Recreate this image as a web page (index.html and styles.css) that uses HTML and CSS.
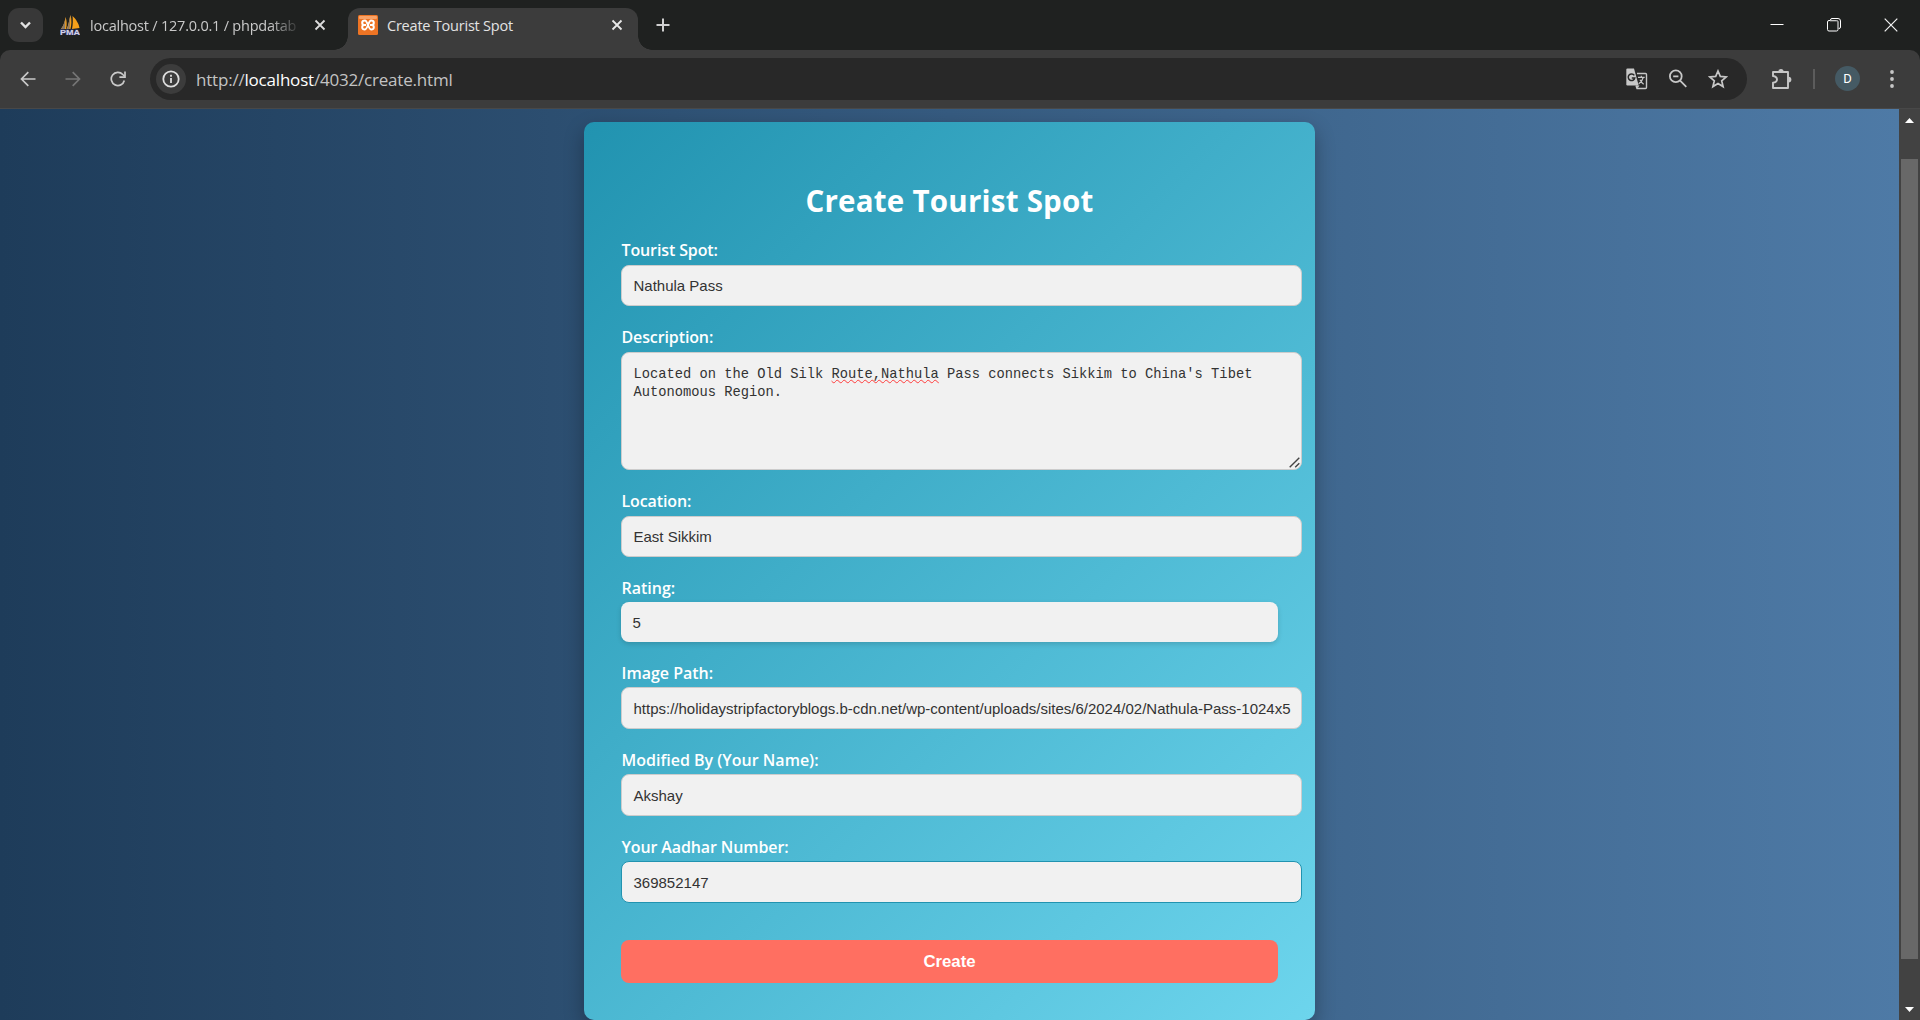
FILE: index.html
```html
<!DOCTYPE html>
<html lang="en">
<head>
<meta charset="utf-8">
<title>Create Tourist Spot</title>
<link rel="stylesheet" href="styles.css">
</head>
<body>
<div class="window">
  <header class="tabstrip">
    <div class="tab-search">
      <svg width="35" height="34" viewBox="0 0 35 34"><path d="M13 14.5l4.5 4.5 4.5-4.5" fill="none" stroke="#e3e3e3" stroke-width="2.4"/></svg>
    </div>
    <div class="tab tab-idle">
      <svg class="favicon" width="20" height="20" viewBox="0 0 20 20">
        <path d="M1 14C4 10 5 6 5.500 2C7 6 7 10 6 14zM6.500 14C9 9 9 5 10.500 0C12 5 11.500 10 10.500 14zM12 14C13 9 13 5 12.500 1C16 4 19 9 19.500 13z" fill="#f6a01a"/>
        <path d="M1 14C4 10 5 6 5.500 2L5 14zM7 14C9 9 9 5 10.500 0L9.500 14z" fill="#8a7968"/>
        <text class="pma" x="0" y="19.500" textLength="20" lengthAdjust="spacingAndGlyphs">PMA</text>
      </svg>
      <span class="tab-title tab-title-idle">localhost / 127.0.0.1 / phpdatab</span>
      <svg class="tab-close" width="12" height="12" viewBox="0 0 12 12"><path d="M1.500 1.500l9 9M10.500 1.500l-9 9" stroke="#dcdcdc" stroke-width="1.800"/></svg>
    </div>
    <div class="tab tab-active">
      <svg class="favicon" width="20" height="20" viewBox="0 0 20 20">
        <rect width="20" height="20" rx="1.500" fill="#ee7424"/><rect x="1" y="1" width="18" height="3" rx="1" fill="#f7a268"/>
        <path d="M7 5.500Q4.200 5.500 4.200 7.700T6.300 10Q4.200 10 4.200 12.300T7 14.500C9.500 14.500 10.500 5.500 13 5.500Q15.800 5.500 15.800 7.700T13.700 10Q15.800 10 15.800 12.300T13 14.500C10.500 14.500 9.500 5.500 7 5.500zM6 10h2M12 10h2" fill="none" stroke="#fff" stroke-width="2" stroke-linejoin="round"/>
      </svg>
      <span class="tab-title tab-title-active">Create Tourist Spot</span>
      <svg class="tab-close" width="12" height="12" viewBox="0 0 12 12"><path d="M1.500 1.500l9 9M10.500 1.500l-9 9" stroke="#e8e8e8" stroke-width="1.800"/></svg>
    </div>
    <svg class="new-tab" width="14" height="14" viewBox="0 0 14 14"><path d="M7 .5v13M.5 7h13" stroke="#d0d0d0" stroke-width="2"/></svg>
    <div class="window-controls">
      <svg width="14" height="14" viewBox="0 0 14 14"><path d="M.5 6.500h13" stroke="#fff"/></svg>
      <svg width="14" height="14" viewBox="0 0 14 14" fill="none"><path d="M3.500 2.500V2Q3.500.5 5 .5h6q2.500 0 2.500 2.500v6q0 1.500-1.500 1.500h-.5" stroke="#fff"/><rect x=".5" y="2.500" width="10.500" height="10.500" rx="1.500" stroke="#fff"/><path d="M3 3h8v8" stroke="#8a8a8a"/></svg>
      <svg width="14" height="14" viewBox="0 0 14 14"><path d="M.7.7l12.600 12.600M13.300.7L.7 13.300" stroke="#f2f2f2" stroke-width="1.200"/></svg>
    </div>
  </header>

  <nav class="toolbar">
    <svg class="nav-icon" width="16" height="16" viewBox="0 0 16 16"><path d="M15.500 8H2M8.300 1.200L1.500 8l6.800 6.800" fill="none" stroke="#c9c9c9" stroke-width="1.700"/></svg>
    <svg class="nav-icon" width="16" height="16" viewBox="0 0 16 16"><path d="M.5 8H14M7.700 1.200L14.500 8l-6.800 6.800" fill="none" stroke="#757575" stroke-width="1.700"/></svg>
    <svg class="nav-icon" width="16" height="16" viewBox="0 0 16 16"><path d="M14.300 9.500A6.600 6.600 0 1 1 12.800 3.500L14.800 5.500" fill="none" stroke="#c9c9c9" stroke-width="1.700"/><path d="M15 .5v5.600H9.400" fill="none" stroke="#c9c9c9" stroke-width="1.700"/></svg>
    <div class="omnibox">
      <span class="site-info"><svg width="18" height="18" viewBox="0 0 18 18"><circle cx="9" cy="9" r="7.700" fill="none" stroke="#dedede" stroke-width="1.800"/><path d="M9 8v5M9 4.800v2" stroke="#dedede" stroke-width="1.800"/></svg></span>
      <span class="url">http://<b>localhost</b>/4032/create.html</span>
      <div class="omnibox-actions">
        <svg width="22" height="22" viewBox="0 0 22 22"><path d="M11 5.500h8.500q1 0 1 1v13q0 1-1 1H11l-1-3" fill="none" stroke="#c7c7c7" stroke-width="1.400"/><path d="M1.500 .5H8l4.700 17H1.500q-1.200 0-1.200-1.200V1.700Q.3.500 1.500.5z" fill="#c7c7c7"/><path d="M8.300 7.400A3.300 3.300 0 1 0 8.800 9.900H5.800" fill="none" stroke="#282828" stroke-width="1.500"/><path d="M12 9.300h6.700M15.300 7.700v1.600M17.200 9.500q-1 4-4.500 6.300M14 11.800q1.200 2.700 3.700 4.400" fill="none" stroke="#c7c7c7" stroke-width="1.200"/><path d="M10.500 17.500h3l-2 3z" fill="#c7c7c7"/></svg>
        <svg width="20" height="20" viewBox="0 0 20 20"><circle cx="7.800" cy="7.300" r="5.900" fill="none" stroke="#c7c7c7" stroke-width="1.800"/><path d="M5.200 7.300h5.200M11.900 11.400l6.400 6.400" stroke="#c7c7c7" stroke-width="1.800"/></svg>
        <svg width="20" height="20" viewBox="0 0 20 20"><path d="M10 2l2.300 5.400 5.900.5-4.500 3.900 1.400 5.800-5.100-3.100-5.100 3.100 1.400-5.800-4.500-3.900 5.900-.5z" fill="none" stroke="#c7c7c7" stroke-width="1.700"/></svg>
      </div>
    </div>
    <svg class="extensions" width="24" height="24" viewBox="0 0 24 24"><path d="M4 5h14v16H3v-5.400q4-.5 4-3.200T3 9V5h2" fill="none" stroke="#c7c7c7" stroke-width="1.900" stroke-linejoin="round"/><path d="M8.400 4.500a2.600 2.600 0 0 1 5.200 0zM18.500 9.700a2.900 2.900 0 0 1 0 5.800z" fill="#c7c7c7"/></svg>
    <span class="divider"></span>
    <span class="avatar">D</span>
    <svg class="kebab" width="4" height="18" viewBox="0 0 4 18"><g fill="#c7c7c7"><circle cx="2" cy="2" r="1.900"/><circle cx="2" cy="9" r="1.900"/><circle cx="2" cy="16" r="1.900"/></g></svg>
  </nav>

  <div class="viewport">
    <main class="page">
      <form class="card">
        <h1 class="card-title">Create Tourist Spot</h1>
        <div class="field tight"><label>Tourist Spot:</label><div class="input">Nathula Pass</div></div>
        <div class="field tight"><label>Description:</label>
          <div class="input textarea">Located on the Old Silk <span class="misspelt">Route,Nathula</span> Pass connects Sikkim to China's Tibet Autonomous Region.
            <svg class="grip" width="11" height="11" viewBox="0 0 11 11"><path d="M.7 10.300l9.600-9.600M6.200 10.300l4.100-4.100" stroke="#444" stroke-width="1.400"/></svg>
          </div>
        </div>
        <div class="field tight"><label>Location:</label><div class="input">East Sikkim</div></div>
        <div class="field compact"><label>Rating:</label><div class="input rating">5</div></div>
        <div class="field compact"><label>Image Path:</label><div class="input">https://holidaystripfactoryblogs.b-cdn.net/wp-content/uploads/sites/6/2024/02/Nathula-Pass-1024x5</div></div>
        <div class="field compact"><label>Modified By (Your Name):</label><div class="input">Akshay</div></div>
        <div class="field compact tight"><label>Your Aadhar Number:</label><div class="input focused">369852147</div></div>
        <button class="submit" type="button">Create</button>
      </form>
    </main>
    <aside class="scrollbar">
      <svg width="9" height="5" viewBox="0 0 9 5"><path d="M0 5L4.500 0 9 5z" fill="#fff"/></svg>
      <span class="thumb"></span>
      <svg width="9" height="5" viewBox="0 0 9 5"><path d="M0 0h9L4.500 5z" fill="#fff"/></svg>
    </aside>
  </div>
</div>
</body>
</html>
```
FILE: styles.css
```css
* { box-sizing: border-box; }
body { margin: 0; background: #1f2120; }
svg { display: block; flex: none; }

.window {
  width: 1920px;
  height: 1020px;
  display: flex;
  flex-direction: column;
  overflow: hidden;
  font-family: "Open Sans", "Noto Sans", sans-serif;
}

/* Tab strip */
.tabstrip {
  height: 50px;
  flex: none;
  display: flex;
  align-items: center;
  padding-left: 8px;
  background: #1f2120;
}
.tab-search { width: 35px; height: 34px; border-radius: 11px; background: #383838; }
.tab { display: flex; align-items: center; height: 42px; }
.tab-idle { width: 305px; padding: 0 22px 0 17px; }
.tab-active {
  position: relative;
  width: 290px;
  margin-top: 8px;
  padding: 0 15px 8px 10px;
  border-radius: 12px 12px 0 0;
  background: #3c3c3c;
}
.tab-active::before,
.tab-active::after {
  content: "";
  position: absolute;
  bottom: 0;
  width: 14px;
  height: 14px;
}
.tab-active::before { left: -14px; background: radial-gradient(circle at 0 0, transparent 13.5px, #3c3c3c 14px); }
.tab-active::after { right: -14px; background: radial-gradient(circle at 100% 0, transparent 13.5px, #3c3c3c 14px); }
.pma { font: bold 8px "Liberation Sans", sans-serif; fill: #d5d5e6; stroke: #3c3f78; stroke-width: 1.2px; paint-order: stroke; }
.tab-title {
  margin-left: 10px;
  padding-top: 2px;
  font-size: 14.5px;
  line-height: 20px;
  letter-spacing: -.22px;
  white-space: nowrap;
}
.tab-title-idle {
  width: 213px;
  color: #c9c9c9;
  -webkit-mask-image: linear-gradient(to right, #000 180px, transparent 211px);
  mask-image: linear-gradient(to right, #000 180px, transparent 211px);
}
.tab-title-active { margin-left: 9px; color: #e3e3e3; }
.tab-close { margin-left: auto; }
.new-tab { margin-left: 18px; }
.window-controls { display: flex; gap: 43px; margin-left: auto; padding-right: 22px; }

/* Toolbar */
.toolbar {
  height: 59px;
  flex: none;
  display: flex;
  align-items: center;
  padding: 0 26px 1px 20px;
  border-bottom: 1px solid #484848;
  border-radius: 10px 10px 0 0;
  background: #3c3c3c;
}
.nav-icon { margin-right: 29px; }
.nav-icon:nth-child(3) { margin-right: 24px; }
.omnibox {
  width: 1597px;
  height: 42px;
  display: flex;
  align-items: center;
  padding: 0 19px 0 6px;
  border-radius: 21px;
  background: #282828;
}
.site-info {
  width: 30px;
  height: 30px;
  display: grid;
  place-items: center;
  border-radius: 50%;
  background: #3c3c3c;
}
.url { margin-left: 10px; padding-top: 2px; font-size: 17px; line-height: 24px; letter-spacing: -.2px; color: #c3c3c3; }
.url b { font-weight: 400; color: #fff; }
.omnibox-actions { display: flex; align-items: center; gap: 20px; margin-left: auto; }
.extensions { margin-left: 23px; }
.divider { width: 2px; height: 20px; margin-left: 19px; background: #5c5c5c; }
.avatar {
  width: 25px;
  height: 25px;
  margin-left: 20px;
  border-radius: 50%;
  background: #455a64;
  color: #fff;
  font: 400 13px/25px Roboto, sans-serif;
  text-align: center;
}
.kebab { margin-left: auto; }

/* Page */
.viewport { height: 911px; flex: none; display: flex; }
.page {
  width: 1899px;
  padding: 13px 0 0 584px;
  background: linear-gradient(to right, #1e3c5a, #4e7aa6);
}
.card {
  width: 731px;
  height: 898px;
  display: flex;
  flex-direction: column;
  gap: 20px;
  padding: 58px 37px 37px;
  border-radius: 10px;
  background: linear-gradient(135deg, #2193b0, #6dd5ed);
  box-shadow: 0 8px 20px rgba(0, 0, 0, .3);
}
.card-title {
  margin: 0 0 -3px;
  font-size: 29.5px;
  line-height: 42px;
  font-weight: 700;
  letter-spacing: .24px;
  text-align: center;
  color: #fff;
}
.field { display: flex; flex-direction: column; }
.field label { height: 23px; margin: 0 0 3px .5px; font-size: 16px; line-height: 23px; font-weight: 600; color: #fff; }
.tight label { letter-spacing: -.12px; }
.compact label { margin-bottom: 2px; }
.input {
  width: 681px;
  height: 41px;
  padding: 0 11.5px;
  border: 1px solid #ccc;
  border-radius: 8px;
  background: #f1f1f1;
  color: #333;
  font: 15px/39px "Liberation Sans", Arial, sans-serif;
  white-space: nowrap;
}
.compact .input { height: 42px; line-height: 41px; }
.textarea {
  position: relative;
  height: 118px;
  padding-top: 13px;
  font: 13.75px/18px "Liberation Mono", monospace;
  white-space: normal;
}
.misspelt { text-decoration: underline wavy #ff3c3c 1px; text-underline-offset: 1px; text-decoration-skip-ink: none; }
.grip { position: absolute; right: 1px; bottom: 1px; }
.compact .rating { width: 657px; height: 40px; border: 0; line-height: 41px; box-shadow: 0 2px 5px rgba(0, 0, 0, .15); }
.compact .focused { border-color: #2193b0; }
.submit {
  width: 657px;
  height: 43px;
  margin-top: 17px;
  padding: 0;
  border: 0;
  border-radius: 8px;
  background: #ff6f61;
  color: #fff;
  font: 700 16.8px/43px "Liberation Sans", Arial, sans-serif;
}

/* Scrollbar */
.scrollbar {
  width: 21px;
  display: flex;
  flex-direction: column;
  align-items: center;
  justify-content: space-between;
  padding: 9px 0 8px;
  background: #424242;
}
.thumb { width: 17px; height: 800px; margin-bottom: 12px; background: #686868; }
```
